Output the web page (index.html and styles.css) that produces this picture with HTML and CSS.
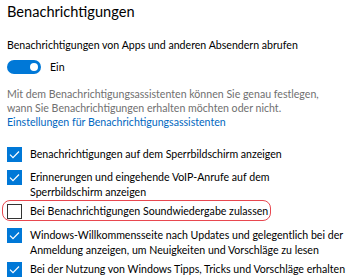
FILE: index.html
```html
<!DOCTYPE html>
<html lang="de">
<head>
<meta charset="utf-8">
<link rel="stylesheet" href="styles.css">
</head>
<body>
<main class="page">
  <h1 class="title">Benachrichtigungen</h1>
  <p class="label">Benachrichtigungen von Apps und anderen Absendern abrufen</p>
  <div class="toggle-row">
    <span class="toggle"><span class="knob"></span></span>
    <span class="toggle-text">Ein</span>
  </div>
  <p class="hint">Mit dem Benachrichtigungsassistenten können Sie genau festlegen,<br>wann Sie Benachrichtigungen erhalten möchten oder nicht.</p>
  <a class="link" href="#">Einstellungen für Benachrichtigungsassistenten</a>
  <ul class="checks">
    <li class="check on"><span class="box"><svg viewBox="0 0 16 16"><path d="M3.2 8.2 L6.4 11.4 L12.8 4.8" /></svg></span><span class="ctext">Benachrichtigungen auf dem Sperrbildschirm anzeigen</span></li>
    <li class="check on"><span class="box"><svg viewBox="0 0 16 16"><path d="M3.2 8.2 L6.4 11.4 L12.8 4.8" /></svg></span><span class="ctext">Erinnerungen und eingehende VoIP-Anrufe auf dem<br>Sperrbildschirm anzeigen</span></li>
    <li class="check off highlight"><span class="box"></span><span class="ctext">Bei Benachrichtigungen Soundwiedergabe zulassen</span></li>
    <li class="check on"><span class="box"><svg viewBox="0 0 16 16"><path d="M3.2 8.2 L6.4 11.4 L12.8 4.8" /></svg></span><span class="ctext">Windows-Willkommensseite nach Updates und gelegentlich bei der<br>Anmeldung anzeigen, um Neuigkeiten und Vorschläge zu lesen</span></li>
    <li class="check on"><span class="box"><svg viewBox="0 0 16 16"><path d="M3.2 8.2 L6.4 11.4 L12.8 4.8" /></svg></span><span class="ctext">Bei der Nutzung von Windows Tipps, Tricks und Vorschläge erhalten</span></li>
  </ul>
</main>
</body>
</html>
```

FILE: styles.css
```css
html, body {
  margin: 0;
  padding: 0;
  background: #ffffff;
}
body {
  font-family: "Lato", "Noto Sans", sans-serif;
  font-size: 10.6px;
  color: #000000;
  width: 348px;
  height: 278px;
  overflow: hidden;
}
.page {
  padding: 0 0 0 7px;
}
.title {
  margin: 0;
  padding-top: 1px;
  font-size: 14.6px;
  font-weight: 400;
  line-height: 22px;
  color: #000;
}
.label {
  margin: 15px 0 0 0;
  line-height: 15px;
}
.toggle-row {
  display: flex;
  align-items: center;
  gap: 9px;
  margin-top: 7px;
}
.toggle {
  width: 34px;
  height: 14px;
  border-radius: 7px;
  background: #0078d7;
  display: flex;
  align-items: center;
  justify-content: flex-end;
  padding-right: 3px;
  box-sizing: border-box;
}
.knob {
  width: 8px;
  height: 8px;
  border-radius: 50%;
  background: #ffffff;
}
.hint {
  margin: 13px 0 0 0;
  line-height: 14px;
  color: #707070;
}
.link {
  display: block;
  line-height: 14px;
  color: #0067c0;
  text-decoration: none;
}
.checks {
  list-style: none;
  margin: 18px 0 0 0;
  padding: 0;
  display: flex;
  flex-direction: column;
  gap: 4px;
}
.check {
  display: flex;
  align-items: flex-start;
  gap: 8px;
  line-height: 15px;
  min-height: 19px;
  white-space: nowrap;
}
.check.highlight {
  min-height: 20px;
}
.box {
  flex: none;
  width: 15px;
  height: 15px;
  box-sizing: border-box;
  display: flex;
}
.check.on .box {
  background: #0078d7;
}
.check.off .box {
  border: 1.5px solid #333333;
}
.box svg {
  width: 15px;
  height: 15px;
}
.box path {
  fill: none;
  stroke: #ffffff;
  stroke-width: 1.3;
}
.highlight {
  position: relative;
}
.highlight::before {
  content: "";
  position: absolute;
  left: -5px;
  top: -4px;
  width: 269px;
  height: 21px;
  box-sizing: border-box;
  border: 1px solid #e8474f;
  border-radius: 8px;
}
```
